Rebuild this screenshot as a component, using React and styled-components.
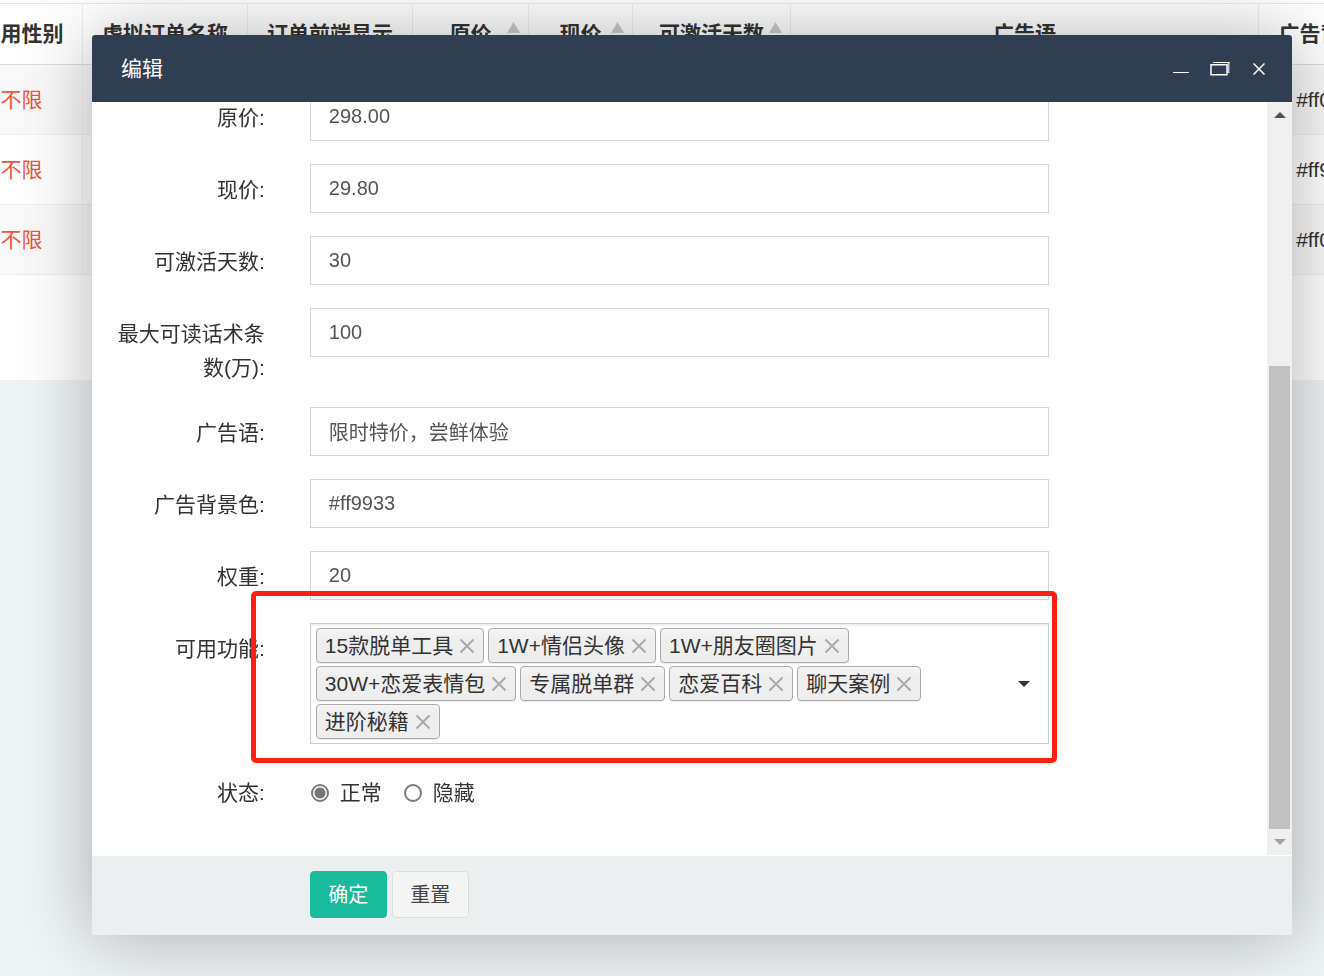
import React, { useState } from "react";
import styled, { createGlobalStyle } from "styled-components";

const GlobalStyle = createGlobalStyle`
  * { box-sizing: border-box; }
  body {
    margin: 0;
    background: #eef3f6;
    color: #333;
    font-family: "Liberation Sans", "Noto Sans CJK SC", sans-serif;
    font-size: 21px;
    line-height: 34px;
  }
  button, input { font: inherit; color: inherit; }
`;

const Panel = styled.main`
  overflow: hidden;
  padding: 3px 0 105px;
  background: #fff;
  box-shadow: 0 1px 2px rgba(0, 0, 0, 0.15);
`;

const Table = styled.table`
  width: calc(100% + 119px);
  margin-left: -39px;
  table-layout: fixed;
  border-collapse: separate;
  border-spacing: 0;
  border-top: 1px solid #e8e8e8;
`;

const HeadCell = styled.th`
  position: relative;
  height: 61px;
  padding: 0;
  border-right: 1px solid #eee;
  border-bottom: 1px solid #ddd;
  font-weight: 700;
  white-space: nowrap;
`;

const BodyRow = styled.tr`
  background: ${(p) => (p.$striped ? "#f9f9f9" : "#fff")};
`;

const Cell = styled.td`
  height: 70px;
  padding: 0;
  border-right: 1px solid #f2f2f2;
  border-bottom: 1px solid #eee;
  text-align: center;
  color: ${(p) => (p.$accent ? "#f4523b" : "#333")};
`;

const SortMark = styled.svg`
  position: absolute;
  right: 8px;
  top: 18px;
`;

const Overlay = styled.div`
  position: fixed;
  inset: 0;
  display: flex;
  padding: 35px 32px 41px 92px;
`;

const Dialog = styled.section`
  flex: 1;
  min-width: 0;
  display: flex;
  flex-direction: column;
  background: #fff;
  border-radius: 3px 3px 0 0;
  box-shadow: 1px 1px 75px rgba(0, 0, 0, 0.3);
`;

const TitleBar = styled.header`
  flex: none;
  display: flex;
  align-items: center;
  justify-content: space-between;
  height: 67px;
  padding: 0 18px 0 29px;
  border-radius: 3px 3px 0 0;
  background: #2f3e50;
  color: #fff;
`;

const Title = styled.h1`
  margin: 0;
  font-size: 21px;
  font-weight: 400;
`;

const WindowButtons = styled.div`
  display: flex;
  gap: 9px;
`;

const IconButton = styled.button`
  display: grid;
  place-items: center;
  width: 30px;
  height: 30px;
  padding: 0;
  border: 0;
  background: none;
  cursor: pointer;
`;

const Body = styled.div`
  flex: 1;
  min-height: 0;
  display: flex;
`;

const Viewport = styled.div`
  flex: 1;
  min-width: 0;
  display: flex;
  flex-direction: column;
  justify-content: flex-end;
  overflow: hidden;
`;

const Form = styled.form`
  flex: none;
  display: flex;
  flex-direction: column;
  gap: 23px;
  padding-bottom: 46px;
`;

const FormRow = styled.div`
  display: grid;
  grid-template-columns: 2fr 8fr 2fr;
  align-items: start;
`;

const Label = styled.label`
  margin-bottom: -1px;
  padding: 9px 23px 0 22px;
  text-align: right;
`;

const Field = styled.div`
  position: relative;
  min-width: 0;
  margin: 0 22px;
`;

const TextInput = styled.input`
  display: block;
  width: 100%;
  height: 49px;
  padding: 0 18px;
  border: 1px solid #d2d6de;
  border-radius: 0;
  background: #fff;
  color: #555;
  font-size: 20px;
  outline: 0;
`;

const TagBox = styled.div`
  display: flex;
  align-items: center;
  padding: 4px 9px 4px 5px;
  border: 1px solid #ccc;
  background: #fff;
  box-shadow: inset 0 2px 2px rgba(0, 0, 0, 0.07);
`;

const TagList = styled.ul`
  flex: 1;
  display: flex;
  flex-wrap: wrap;
  gap: 3px 4px;
  margin: 0;
  padding: 0;
  list-style: none;
`;

const Tag = styled.li`
  display: flex;
  align-items: center;
  gap: 6px;
  height: 35px;
  padding: 0 8px;
  border: 1px solid #aaa;
  border-radius: 4px;
  background: linear-gradient(#f4f4f4, #eee 30%);
  box-shadow: 0 1px 1px rgba(0, 0, 0, 0.08);
  white-space: nowrap;
`;

const RemoveButton = styled.button`
  display: flex;
  padding: 0;
  border: 0;
  background: none;
  cursor: pointer;
`;

const Highlight = styled.div`
  position: absolute;
  inset: -32px -8px -19px -59px;
  border: 5px solid #ff1f10;
  border-radius: 5px;
  pointer-events: none;
`;

const RadioGroup = styled.div`
  display: flex;
  gap: 21px;
  padding-top: 9px;
`;

const RadioLabel = styled.label`
  display: flex;
  align-items: center;
  gap: 11px;
`;

const Radio = styled.input`
  appearance: none;
  width: 18px;
  height: 18px;
  margin: 0 0 0 1px;
  border: 2px solid #7b7b7b;
  border-radius: 50%;
  background: #fff;
  &:checked {
    background: radial-gradient(circle, #767676 5px, #fff 6px);
  }
`;

const ScrollBar = styled.div`
  flex: none;
  display: flex;
  flex-direction: column;
  width: 25px;
  margin-bottom: 1px;
  padding: 0 2px;
  background: #f0f0f0;
`;

const ScrollArrow = styled.div`
  display: grid;
  place-items: center;
  height: 26px;
`;

const ScrollSpace = styled.div`
  flex: 238;
`;

const ScrollThumb = styled.div`
  flex: 464;
  background: #c1c1c1;
`;

const Footer = styled.footer`
  flex: none;
  padding: 15px 25px 17px 0;
  background: #ebeff0;
`;

const Actions = styled.div`
  grid-column: 2;
  display: flex;
  gap: 5px;
  margin: 0 22px;
`;

const ActionButton = styled.button`
  min-width: 77px;
  height: 47px;
  padding: 0 17px;
  border: 1px solid ${(p) => (p.$primary ? "#18bc9c" : "#ddd")};
  border-radius: 4px;
  background: ${(p) => (p.$primary ? "#18bc9c" : "#f4f4f4")};
  color: ${(p) => (p.$primary ? "#fff" : "#444")};
  font-size: 20px;
  cursor: pointer;
`;

const columns = [
  { name: "适用性别", width: 122 },
  { name: "虚拟订单名称", width: 165 },
  { name: "订单前端显示", width: 165 },
  { name: "原价", width: 116, sortable: true },
  { name: "现价", width: 104, sortable: true },
  { name: "可激活天数", width: 158, sortable: true },
  { name: "广告语" },
  { name: "广告背景色", width: 145 },
];

const records = ["#ff0000", "#ff9933", "#ff0000"];

const fields = [
  { id: "price", label: "原价:", value: "298.00" },
  { id: "sale", label: "现价:", value: "29.80" },
  { id: "days", label: "可激活天数:", value: "30" },
  { id: "limit", label: "最大可读话术条数(万):", value: "100" },
  { id: "slogan", label: "广告语:", value: "限时特价，尝鲜体验" },
  { id: "color", label: "广告背景色:", value: "#ff9933" },
  { id: "weight", label: "权重:", value: "20" },
];

const initialTags = [
  "15款脱单工具",
  "1W+情侣头像",
  "1W+朋友圈图片",
  "30W+恋爱表情包",
  "专属脱单群",
  "恋爱百科",
  "聊天案例",
  "进阶秘籍",
];

function Records() {
  return (
    <Panel>
      <Table>
        <colgroup>
          {columns.map((c) => (
            <col key={c.name} width={c.width} />
          ))}
        </colgroup>
        <thead>
          <tr>
            {columns.map((c) => (
              <HeadCell key={c.name}>
                {c.name}
                {c.sortable && (
                  <SortMark width="13" height="26" viewBox="0 0 13 26">
                    <path d="M6.5 0L13 11H0zM0 13h13L6.5 24z" fill="#ccc" />
                  </SortMark>
                )}
              </HeadCell>
            ))}
          </tr>
        </thead>
        <tbody>
          {records.map((color, i) => (
            <BodyRow key={i} $striped={i % 2 === 0}>
              <Cell $accent>不限</Cell>
              {columns.slice(2).map((c) => (
                <Cell key={c.name} />
              ))}
              <Cell>{color}</Cell>
            </BodyRow>
          ))}
        </tbody>
      </Table>
    </Panel>
  );
}

export default function App() {
  const [tags, setTags] = useState(initialTags);

  return (
    <>
      <GlobalStyle />
      <Records />
      <Overlay>
        <Dialog role="dialog" aria-labelledby="dialog-title">
          <TitleBar>
            <Title id="dialog-title">编辑</Title>
            <WindowButtons>
              <IconButton type="button" aria-label="最小化">
                <svg width="16" height="16" viewBox="0 0 16 16">
                  <path d="M0 11.5h16" stroke="#fff" />
                </svg>
              </IconButton>
              <IconButton type="button" aria-label="还原">
                <svg width="20" height="14" viewBox="0 0 20 14" fill="none">
                  <path d="M3 .5h17" stroke="#fff" />
                  <path d="M18.5 1v10" stroke="#c3c8cd" strokeWidth="2" />
                  <rect x="1" y="2.75" width="16" height="10" stroke="#fff" strokeWidth="1.5" />
                </svg>
              </IconButton>
              <IconButton type="button" aria-label="关闭">
                <svg width="12" height="12" viewBox="0 0 12 12">
                  <path d="M.5.5l11 11M11.5.5l-11 11" stroke="#fff" strokeWidth="1.5" />
                </svg>
              </IconButton>
            </WindowButtons>
          </TitleBar>
          <Body>
            <Viewport>
              <Form id="edit-form">
                {fields.map((f) => (
                  <FormRow key={f.id}>
                    <Label htmlFor={f.id}>{f.label}</Label>
                    <Field>
                      <TextInput id={f.id} type="text" defaultValue={f.value} />
                    </Field>
                  </FormRow>
                ))}
                <FormRow>
                  <Label as="span" id="features">可用功能:</Label>
                  <Field>
                    <TagBox role="group" aria-labelledby="features">
                      <TagList>
                        {tags.map((tag) => (
                          <Tag key={tag}>
                            {tag}
                            <RemoveButton
                              type="button"
                              aria-label={`移除${tag}`}
                              onClick={() => setTags(tags.filter((t) => t !== tag))}
                            >
                              <svg width="16" height="16" viewBox="0 0 16 16">
                                <path d="M1.5 1.5l13 13M14.5 1.5l-13 13" stroke="#aaa" strokeWidth="2" />
                              </svg>
                            </RemoveButton>
                          </Tag>
                        ))}
                      </TagList>
                      <IconButton type="button" aria-label="展开选项">
                        <svg width="12" height="6" viewBox="0 0 12 6">
                          <path d="M0 0h12L6 6z" fill="#333" />
                        </svg>
                      </IconButton>
                    </TagBox>
                    <Highlight />
                  </Field>
                </FormRow>
                <FormRow>
                  <Label as="span" id="status">状态:</Label>
                  <Field>
                    <RadioGroup role="radiogroup" aria-labelledby="status">
                      <RadioLabel>
                        <Radio type="radio" name="status" value="normal" defaultChecked />
                        正常
                      </RadioLabel>
                      <RadioLabel>
                        <Radio type="radio" name="status" value="hidden" />
                        隐藏
                      </RadioLabel>
                    </RadioGroup>
                  </Field>
                </FormRow>
              </Form>
            </Viewport>
            <ScrollBar aria-hidden="true">
              <ScrollArrow>
                <svg width="12" height="6" viewBox="0 0 12 6">
                  <path d="M0 6h12L6 0z" fill="#505050" />
                </svg>
              </ScrollArrow>
              <ScrollSpace />
              <ScrollThumb />
              <ScrollArrow>
                <svg width="12" height="6" viewBox="0 0 12 6">
                  <path d="M0 0h12L6 6z" fill="#a3a3a3" />
                </svg>
              </ScrollArrow>
            </ScrollBar>
          </Body>
          <Footer>
            <FormRow>
              <Actions>
                <ActionButton type="submit" form="edit-form" $primary>确定</ActionButton>
                <ActionButton type="reset" form="edit-form">重置</ActionButton>
              </Actions>
            </FormRow>
          </Footer>
        </Dialog>
      </Overlay>
    </>
  );
}
